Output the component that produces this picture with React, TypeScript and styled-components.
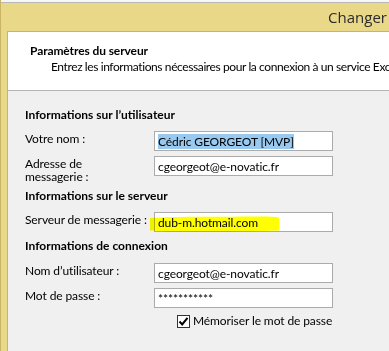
import styled, {createGlobalStyle} from "styled-components";

const GlobalStyle = createGlobalStyle`
  html, body {
    margin: 0;
    padding: 0;
    overflow: hidden;
    background: #ffffff;
  }
  body {
    font-family: Lato, "Noto Sans", sans-serif;
    font-size: 12px;
    letter-spacing: -0.1px;
    color: #000;
  }
`;

const Window = styled.div`
  width: 389px;
  height: 351px;
  display: flex;
  flex-direction: column;
  background: #e9d888;
  border-left: 1px solid #c9b468;
  box-sizing: border-box;
  overflow: hidden;
`;

const TopStrip = styled.div`
  height: 2px;
  background: #f7f7f7;
  border-bottom: 1px solid #b8b8b8;
  margin-left: -1px;
`;

const TitleBar = styled.div`
  height: 28px;
  display: flex;
  align-items: center;
  justify-content: flex-end;
  padding-right: 2px;
  font-family: "Open Sans", sans-serif;
  font-size: 15px;
  letter-spacing: 0;
  color: #2b2b2b;
  white-space: nowrap;
`;

const Client = styled.div`
  flex: 1;
  margin-left: 6px;
  display: flex;
  flex-direction: column;
  border-left: 1px solid #c9b468;
  border-top: 1px solid #c9b468;
  background: #f0f0f0;
`;

const Header = styled.div`
  height: 59px;
  background: #ffffff;
  border-bottom: 1px solid #b5b5b5;
  padding: 11px 0 0 22px;
  box-sizing: border-box;
  white-space: nowrap;
  overflow: hidden;
`;

const HeaderTitle = styled.div`
  font-weight: 700;
  line-height: 15px;
`;

const HeaderText = styled.div`
  line-height: 15px;
  letter-spacing: -0.4px;
  margin: 1px 0 0 21px;
`;

const Form = styled.div`
  display: flex;
  flex-direction: column;
  padding: 17px 0 0 17px;
`;

const SectionTitle = styled.div<{ $gap: number }>`
  font-weight: 700;
  line-height: 14px;
  letter-spacing: 0;
  margin-top: ${(p) => p.$gap}px;
`;

const Row = styled.div<{ $gap: number }>`
  position: relative;
  display: grid;
  grid-template-columns: 129px 179px;
  align-items: start;
  margin-top: ${(p) => p.$gap}px;
`;

const Label = styled.div`
  line-height: 13px;
  padding-top: 1px;
  white-space: nowrap;
`;

const Field = styled.div`
  height: 20px;
  box-sizing: border-box;
  border: 1px solid #ababab;
  background: #ffffff;
  padding: 0 3px;
  display: flex;
  align-items: center;
  white-space: nowrap;
  overflow: hidden;
`;

const Selected = styled.span`
  background: #99c9ef;
  line-height: 15px;
`;

const Highlighter = styled.svg`
  position: absolute;
  left: 124px;
  top: 3px;
  width: 131px;
  height: 17px;
  mix-blend-mode: multiply;
  pointer-events: none;
`;

const CheckRow = styled.label`
  display: flex;
  align-items: center;
  gap: 3px;
  margin: 6px 0 0 152px;
  line-height: 14px;
`;

const Box = styled.span`
  width: 13px;
  height: 13px;
  box-sizing: border-box;
  border: 1px solid #333;
  background: #fff;
  display: flex;
  align-items: center;
  justify-content: center;
`;

export default function App() {
  return (
    <>
      <GlobalStyle/>
      <Window>
        <TopStrip/>
        <TitleBar>Changer</TitleBar>
        <Client>
          <Header>
            <HeaderTitle>Paramètres du serveur</HeaderTitle>
            <HeaderText>Entrez les informations nécessaires pour la connexion à un service Exchange ActiveSync.</HeaderText>
          </Header>
          <Form>
            <SectionTitle $gap={0}>Informations sur l’utilisateur</SectionTitle>
            <Row $gap={9}>
              <Label>Votre nom :</Label>
              <Field><Selected>Cédric GEORGEOT [MVP]</Selected></Field>
            </Row>
            <Row $gap={5}>
              <Label>Adresse de<br/>messagerie :</Label>
              <Field>cgeorgeot@e-novatic.fr</Field>
            </Row>
            <SectionTitle $gap={6}>Informations sur le serveur</SectionTitle>
            <Row $gap={9}>
              <Label>Serveur de messagerie :</Label>
              <Field>dub-m.hotmail.com</Field>
              <Highlighter viewBox="0 0 131 17" preserveAspectRatio="none">
                <path d="M1 3 C30 1 70 2 100 1.5 C112 1.5 124 1 130 2.5 L130.5 15.5 C110 16.5 60 16.5 30 16.5 C15 16.5 6 16 1 15.5 Z" fill="#ffff00"/>
              </Highlighter>
            </Row>
            <SectionTitle $gap={7}>Informations de connexion</SectionTitle>
            <Row $gap={10}>
              <Label>Nom d’utilisateur :</Label>
              <Field>cgeorgeot@e-novatic.fr</Field>
            </Row>
            <Row $gap={5}>
              <Label>Mot de passe :</Label>
              <Field>***********</Field>
            </Row>
            <CheckRow>
              <Box>
                <svg width="11" height="11" viewBox="0 0 11 11">
                  <path d="M1.5 5.5 L4.2 8.4 L9.5 1.8" stroke="#000" strokeWidth="2" fill="none"/>
                </svg>
              </Box>
              Mémoriser le mot de passe
            </CheckRow>
          </Form>
        </Client>
      </Window>
    </>
  );
}
